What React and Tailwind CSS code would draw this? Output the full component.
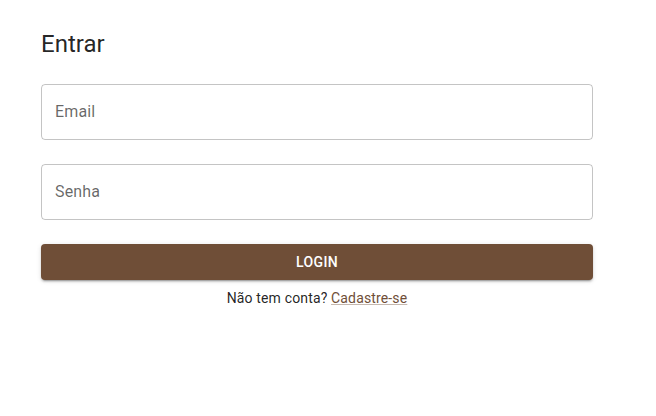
export default function App() {
  const font = { fontFamily: 'Roboto, "Liberation Sans", sans-serif' };
  return (
    <div className="min-h-[416px] w-full bg-white" style={font}>
      <div className="w-[552px] ml-[41px] pt-[28px] flex flex-col">
        <h1 className="text-[24px] leading-[32px] font-normal text-[rgba(0,0,0,0.87)]">Entrar</h1>
        <div className="mt-[24px] h-[56px] rounded-[4px] border border-[rgba(0,0,0,0.23)] flex items-center px-[13px]">
          <span className="text-[16px] tracking-[0.15px] text-[rgba(0,0,0,0.6)]">Email</span>
        </div>
        <div className="mt-[24px] h-[56px] rounded-[4px] border border-[rgba(0,0,0,0.23)] flex items-center px-[13px]">
          <span className="text-[16px] tracking-[0.15px] text-[rgba(0,0,0,0.6)]">Senha</span>
        </div>
        <button className="mt-[24px] h-[36px] rounded-[4px] bg-[#6f4e37] text-white text-[14px] font-medium tracking-[0.4px] uppercase shadow-[0px_3px_1px_-2px_rgba(0,0,0,0.2),0px_2px_2px_0px_rgba(0,0,0,0.14),0px_1px_5px_0px_rgba(0,0,0,0.12)]">
          Login
        </button>
        <p className="mt-[8px] text-center text-[14px] leading-[20px] tracking-[0.15px] text-[rgba(0,0,0,0.87)]">
          Não tem conta?{" "}
          <a className="text-[#6f4e37] underline decoration-[rgba(111,78,55,0.4)]" href="#">Cadastre-se</a>
        </p>
      </div>
    </div>
  );
}
